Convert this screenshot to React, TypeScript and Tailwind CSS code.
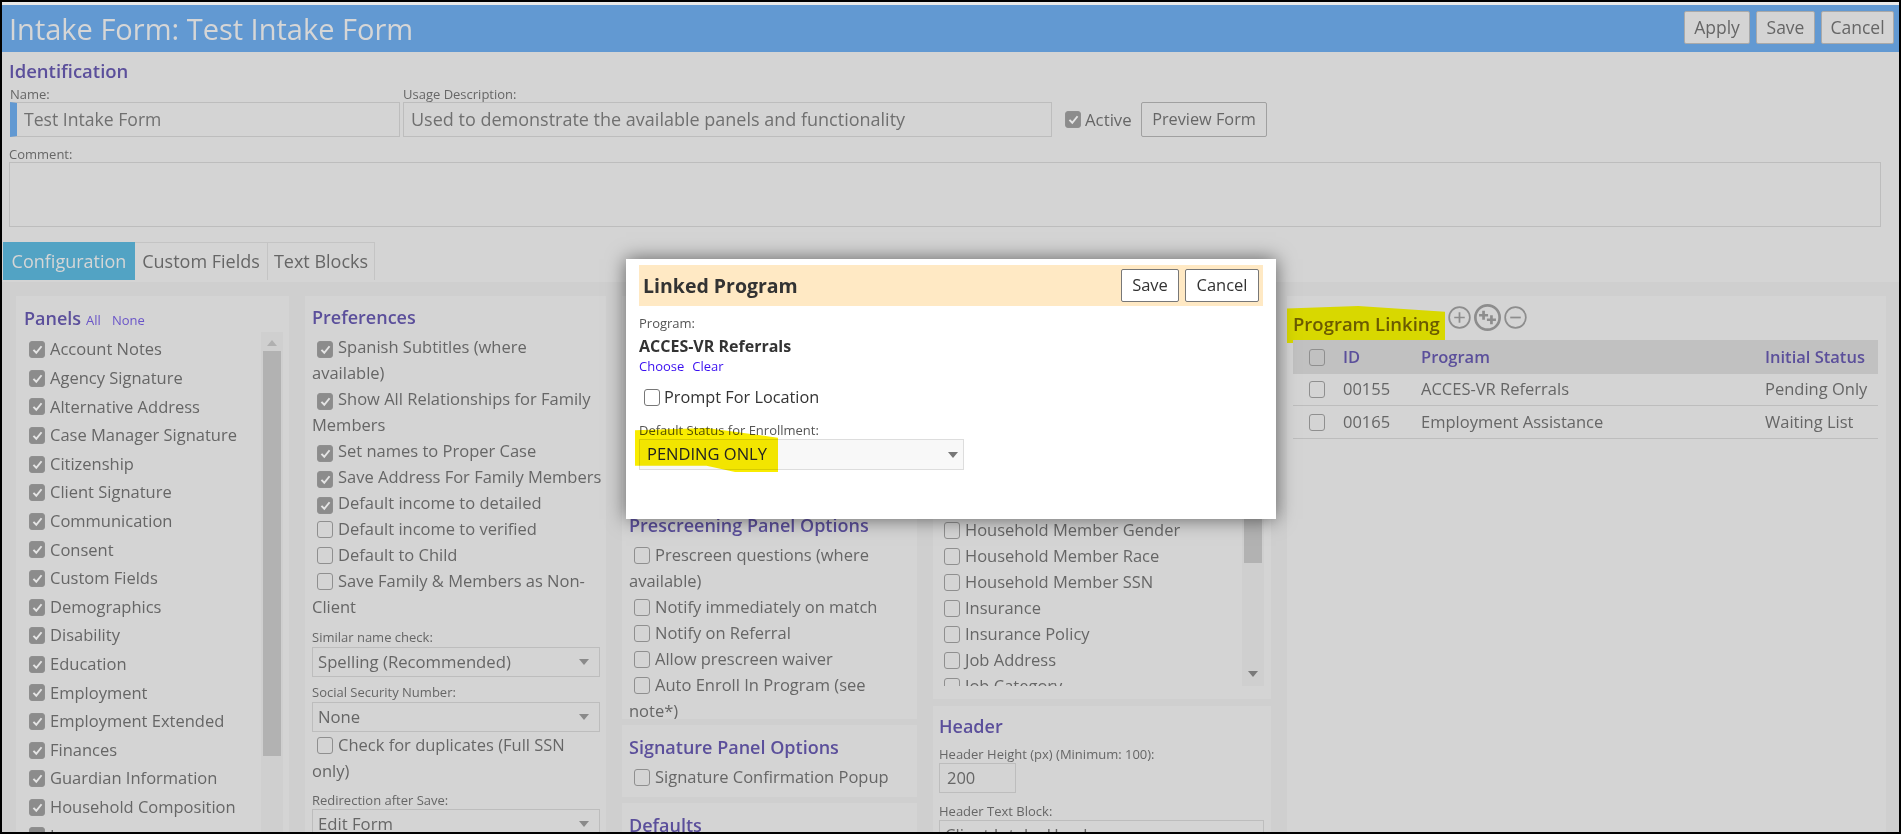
import React from 'react'

const panelNames = [
  'Account Notes', 'Agency Signature', 'Alternative Address', 'Case Manager Signature', 'Citizenship',
  'Client Signature', 'Communication', 'Consent', 'Custom Fields', 'Demographics', 'Disability', 'Education',
  'Employment', 'Employment Extended', 'Finances', 'Guardian Information', 'Household Composition', 'Income',
]

const householdNames = [
  'Household Member Gender', 'Household Member Race', 'Household Member SSN', 'Insurance', 'Insurance Policy',
  'Job Address', 'Job Category',
]

const preferences: { label: string; checked: boolean }[] = [
  { label: 'Spanish Subtitles (where\navailable)', checked: true },
  { label: 'Show All Relationships for Family Members', checked: true },
  { label: 'Set names to Proper Case', checked: true },
  { label: 'Save Address For Family Members', checked: true },
  { label: 'Default income to detailed', checked: true },
  { label: 'Default income to verified', checked: false },
  { label: 'Default to Child', checked: false },
  { label: 'Save Family & Members as Non-Client', checked: false },
]

const prescreenOptions = [
  'Prescreen questions (where available)', 'Notify immediately on match', 'Notify on Referral',
  'Allow prescreen waiver', 'Auto Enroll In Program (see note*)',
]

const Check = ({ checked = false, className = '' }: { checked?: boolean; className?: string }) => (
  <span
    className={`inline-flex h-[17px] w-[16px] shrink-0 items-center justify-center rounded-[3px] border border-[#8f8f8f] align-[-3px] ${checked ? 'bg-[#8c8c8c]' : ''} ${className}`}
  >
    {checked && (
      <svg viewBox="0 0 16 16" className="h-[13px] w-[13px]" fill="none" stroke="#e4e4e4" strokeWidth="2.4">
        <path d="M3 8.5 6.5 12 13 4" />
      </svg>
    )}
  </span>
)

const Heading = ({ children }: { children: React.ReactNode }) => (
  <h3 className="text-[18px] leading-[24px] font-semibold text-[#5b4f9b]">{children}</h3>
)

const Label = ({ children }: { children: React.ReactNode }) => (
  <div className="text-[13px] leading-[16px] text-[#666]">{children}</div>
)

const Select = ({ value, className = '' }: { value: string; className?: string }) => (
  <div className={`flex h-[30px] items-center justify-between border border-[#bdbdbd] pr-[10px] pl-[5px] text-[16.7px] text-[#666] ${className}`}>
    <span>{value}</span>
    <span className="h-0 w-0 border-x-[5px] border-t-[6px] border-x-transparent border-t-[#8a8a8a]" />
  </div>
)

const Wrapped = ({ label, checked }: { label: string; checked?: boolean }) => (
  <div className="leading-[26px] whitespace-pre-line">
    <Check checked={checked} className="mr-[5px] ml-[5px]" />
    {label}
  </div>
)

const Circle = ({ size, double, minus }: { size: number; double?: boolean; minus?: boolean }) => (
  <svg width={size} height={size} viewBox="0 0 24 24" fill="none" stroke="#8d8d8d" strokeWidth={double ? 2.4 : 1.8}>
    <circle cx="12" cy="12" r="10.8" />
    {minus && <path d="M6.5 12h11" />}
    {!minus && !double && <path d="M6.5 12h11M12 6.5v11" />}
    {double && <path d="M4.5 10h8M8.5 6v8M11.5 14h8M15.5 10v8" />}
  </svg>
)

const ScrollArrow = ({ up }: { up?: boolean }) => (
  <span
    className={`h-0 w-0 border-x-[5px] border-x-transparent ${up ? 'border-b-[6px] border-b-[#b0b0b0]' : 'border-t-[6px] border-t-[#7a7a7a]'}`}
  />
)

export default function App() {
  return (
    <div className="h-[834px] w-[1901px] overflow-hidden bg-black p-[2px] font-['Open_Sans',sans-serif] text-[16.5px] text-[#666]">
      <div className="relative flex h-full flex-col overflow-hidden bg-[#d4d4d4]">
        <div className="h-[3px] bg-[#e9e9e9]" />

        {/* title bar */}
        <header className="flex h-[47px] shrink-0 items-center justify-between bg-[#6299d2] pr-[5px] pl-[7px]">
          <h1 className="text-[29px] text-[#d6d6d6]">Intake Form: Test Intake Form</h1>
          <div className="flex gap-[6px] pb-[2px]">
            {[['Apply', 'w-[66px]'], ['Save', 'w-[59px]'], ['Cancel', 'w-[73px]']].map(([b, w]) => (
              <button key={b} className={`h-[33px] rounded-[2px] border border-[#a9a9a9] bg-[#d4d4d4] text-[17.5px] text-[#666] ${w}`}>
                {b}
              </button>
            ))}
          </div>
        </header>

        {/* identification */}
        <section className="h-[190px] shrink-0 pt-[3px] pl-[7px]">
          <div className="text-[18.5px] leading-[31px] font-semibold text-[#5b4f9b]">Identification</div>
          <div className="flex items-end">
            <div className="ml-[1px] w-[390px]">
              <Label>Name:</Label>
              <div className="flex h-[35px] items-center border border-[#bdbdbd] border-l-[7px] border-l-[#6299d2] pl-[7px] text-[17.6px] text-[#707070]">
                Test Intake Form
              </div>
            </div>
            <div className="ml-[3px] w-[649px]">
              <Label>Usage Description:</Label>
              <div className="flex h-[35px] items-center border border-[#bdbdbd] pl-[7px] text-[18px] text-[#707070]">
                Used to demonstrate the available panels and functionality
              </div>
            </div>
            <div className="ml-[13px] flex h-[35px] w-[69px] items-center gap-[4px] text-[16.8px]">
              <Check checked />
              <span>Active</span>
            </div>
            <button className="ml-[7px] h-[35px] w-[126px] rounded-[2px] border border-[#a0a0a0] text-[16.3px] text-[#666]">
              Preview Form
            </button>
          </div>
          <div className="mt-[9px]">
            <Label>Comment:</Label>
            <div className="h-[65px] w-[1872px] border border-[#bdbdbd]" />
          </div>
        </section>

        {/* tabs */}
        <nav className="flex h-[38px] shrink-0 pl-[1px] text-[18px]">
          <div className="flex w-[132px] items-center justify-center bg-[#52a3c4] text-[#d6d6d6]">Configuration</div>
          <div className="flex w-[133px] items-center justify-center border-t border-r border-[#c4c4c4]">Custom Fields</div>
          <div className="flex w-[107px] items-center justify-center border-t border-r border-[#c4c4c4]">Text Blocks</div>
        </nav>

        {/* configuration */}
        <main className="mt-[2px] flex min-h-0 flex-1 gap-[16px] bg-[#cfcfcf] pt-[14px] pl-[14px]">
          <div className="w-[273px] shrink-0 bg-[#d4d4d4] pt-[10px] pl-[8px]">
            <div className="flex items-baseline gap-[5px]">
              <Heading>Panels</Heading>
              <span className="text-[13px] text-[#6a55c8]">All</span>
              <span className="ml-[6px] text-[13px] text-[#6a55c8]">None</span>
            </div>
            <div className="mt-[1px] flex">
              <div className="h-[510px] w-[237px] overflow-hidden pt-[4px] pl-[5px]">
                {panelNames.map((name) => (
                  <div key={name} className="flex h-[28.6px] items-center gap-[5px]">
                    <Check checked />
                    <span>{name}</span>
                  </div>
                ))}
              </div>
              <div className="flex h-[510px] w-[22px] flex-col items-center bg-[#cfcfcf] pt-[8px]">
                <ScrollArrow up />
                <div className="mt-[5px] h-[405px] w-[18px] bg-[#b2b2b2]" />
              </div>
            </div>
          </div>

          <div className="w-[301px] shrink-0 bg-[#d4d4d4] pt-[9px] pr-[2px] pl-[7px]">
            <Heading>Preferences</Heading>
            <div className="mt-[5px]">
              {preferences.map((p) => (
                <Wrapped key={p.label} label={p.label} checked={p.checked} />
              ))}
            </div>
            <div className="mt-[9px] pr-[4px]">
              <Label>Similar name check:</Label>
              <Select value="Spelling (Recommended)" className="mt-[2px]" />
            </div>
            <div className="mt-[7px] pr-[4px]">
              <Label>Social Security Number:</Label>
              <Select value="None" className="mt-[2px]" />
            </div>
            <Wrapped label="Check for duplicates (Full SSN only)" />
            <div className="mt-[8px] pr-[4px]">
              <Label>Redirection after Save:</Label>
              <Select value="Edit Form" className="mt-[1px]" />
            </div>
          </div>

          <div className="flex w-[295px] shrink-0 flex-col gap-[6px]">
            <div className="h-[423px] shrink-0 overflow-hidden bg-[#d4d4d4] pt-[217px] pl-[7px]">
              <Heading>Prescreening Panel Options</Heading>
              <div className="mt-[5px]">
                {prescreenOptions.map((p) => (
                  <Wrapped key={p} label={p} />
                ))}
              </div>
            </div>
            <div className="h-[72px] shrink-0 bg-[#d4d4d4] pt-[10px] pl-[7px]">
              <Heading>Signature Panel Options</Heading>
              <div className="mt-[5px]">
                <Wrapped label="Signature Confirmation Popup" />
              </div>
            </div>
            <div className="flex-1 bg-[#d4d4d4] pt-[10px] pl-[7px]">
              <Heading>Defaults</Heading>
            </div>
          </div>

          <div className="flex w-[338px] shrink-0 flex-col gap-[7px]">
            <div className="flex h-[403px] shrink-0 items-end bg-[#d4d4d4] pb-[13px] pl-[11px]">
              <div className="h-[169px] w-[298px] overflow-hidden">
                {householdNames.map((n) => (
                  <div key={n} className="flex h-[26px] items-center gap-[5px]">
                    <Check />
                    <span>{n}</span>
                  </div>
                ))}
              </div>
              <div className="flex h-[169px] w-[22px] flex-col items-center justify-between bg-[#cfcfcf] pb-[9px]">
                <div className="h-[46px] w-[18px] bg-[#b2b2b2]" />
                <ScrollArrow />
              </div>
            </div>
            <div className="flex-1 bg-[#d4d4d4] pt-[8px] pl-[6px]">
              <Heading>Header</Heading>
              <div className="mt-[8px]">
                <Label>Header Height (px) (Minimum: 100):</Label>
              </div>
              <div className="mt-[1px] flex h-[30px] w-[77px] items-center border border-[#bdbdbd] pl-[7px]">200</div>
              <div className="mt-[10px]">
                <Label>Header Text Block:</Label>
              </div>
              <Select value="Client Intake Header" className="mt-[1px] w-[325px]" />
            </div>
          </div>

          <div className="w-[599px] shrink-0 bg-[#d4d4d4] pt-[12px] pr-[8px] pl-[6px]">
            <div className="relative flex h-[32px] items-center">
              <div className="absolute -top-[2px] -left-[6px] h-[41px] w-[158px] bg-[#d8d800] [clip-path:polygon(0_6%,45%_0,100%_14%,100%_100%,60%_90%,0_90%)]" />
              <span className="relative text-[18.5px] font-semibold text-[#6b5b00]">Program Linking</span>
              <div className="relative -mt-[14px] ml-[8px] flex items-center gap-[3px]">
                <Circle size={23} />
                <Circle size={27} double />
                <Circle size={23} minus />
              </div>
            </div>
            <div className="relative">
              <div className="flex h-[34px] items-center bg-[#c1c1c1] pl-[16px] font-semibold text-[#5b4f9b]">
                <Check className="mr-[18px]" />
                <span className="w-[78px]">ID</span>
                <span className="flex-1">Program</span>
                <span className="w-[113px]">Initial Status</span>
              </div>
              <div className="flex h-[32px] items-center border-b border-[#bdbdbd] pl-[16px]">
                <Check className="mr-[18px]" />
                <span className="w-[78px]">00155</span>
                <span className="flex-1">ACCES-VR Referrals</span>
                <span className="w-[113px]">Pending Only</span>
              </div>
              <div className="flex h-[33px] items-center border-b border-[#bdbdbd] pl-[16px]">
                <Check className="mr-[18px]" />
                <span className="w-[78px]">00165</span>
                <span className="flex-1">Employment Assistance</span>
                <span className="w-[113px]">Waiting List</span>
              </div>
            </div>
          </div>
        </main>

        {/* linked program dialog */}
        <div className="absolute top-[257px] left-[624px] h-[260px] w-[650px] bg-white px-[13px] pt-[6px] text-[#333] shadow-[0_0_18px_rgba(0,0,0,0.55)]">
          <div className="flex h-[41px] items-center justify-between bg-[#ffe9c4] pr-[4px] pl-[4px]">
            <span className="text-[19.5px] font-bold text-[#333]">Linked Program</span>
            <div className="flex gap-[6px]">
              <button className="h-[33px] w-[58px] rounded-[2px] border border-[#777] bg-white text-[16.5px] text-[#333]">Save</button>
              <button className="h-[33px] w-[74px] rounded-[2px] border border-[#777] bg-white text-[16.5px] text-[#333]">Cancel</button>
            </div>
          </div>
          <div className="mt-[9px] text-[13px] leading-[16px] text-[#555]">Program:</div>
          <div className="mt-[4px] text-[16px] leading-[22px] font-bold text-[#333]">ACCES-VR Referrals</div>
          <div className="mt-[1px] flex gap-[8px] text-[13px] leading-[16px] text-[#3a0ff0]">
            <span>Choose</span>
            <span>Clear</span>
          </div>
          <div className="mt-[12px] flex items-center gap-[4px] pl-[5px] text-[16.3px] leading-[22px]">
            <Check className="!border-[#777]" />
            <span>Prompt For Location</span>
          </div>
          <div className="mt-[14px] text-[13px] leading-[16px] text-[#555]">Default Status for Enrollment:</div>
          <div className="relative mt-[1px] flex h-[31px] w-[325px] items-center justify-between border border-[#ddd] bg-[#f8f8f8] pr-[5px] pl-[7px] text-[#222]">
            <span className="relative z-10">PENDING ONLY</span>
            <span className="h-0 w-0 border-x-[5px] border-t-[6px] border-x-transparent border-t-[#777]" />
          </div>
          <div className="absolute top-[169px] left-[9px] h-[44px] w-[143px] bg-[#f9ec00] mix-blend-multiply [clip-path:polygon(0_5%,50%_0,100%_22%,100%_100%,70%_100%,50%_86%,0_86%)]" />
        </div>
      </div>
    </div>
  )
}
